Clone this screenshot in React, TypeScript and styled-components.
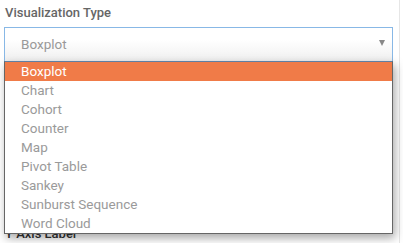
import styled, { createGlobalStyle } from "styled-components";

const GlobalStyle = createGlobalStyle`
  html, body {
    margin: 0;
    padding: 0;
    background: #fff;
  }
  body {
    font-family: Roboto, "Noto Sans", sans-serif;
  }
`;

const options = [
  "Boxplot",
  "Chart",
  "Cohort",
  "Counter",
  "Map",
  "Pivot Table",
  "Sankey",
  "Sunburst Sequence",
  "Word Cloud",
];

export default function App() {
  const selected = "Boxplot";

  return (
    <Page>
      <GlobalStyle />
      <Panel>
        <Field>
          <Label>Visualization Type</Label>
          <SelectWrap>
            <Control>
              <Value>{selected}</Value>
              <Arrow />
            </Control>
            <Menu>
              {options.map((opt) => (
                <Option key={opt} $active={opt === selected}>
                  {opt}
                </Option>
              ))}
            </Menu>
          </SelectWrap>
        </Field>
        <NextField>
          <Label $dark>Y Axis Label</Label>
        </NextField>
      </Panel>
    </Page>
  );
}

const Page = styled.div`
  width: 403px;
  height: 243px;
  overflow: hidden;
  background: #fff;
`;

const Panel = styled.div`
  width: 400px;
  height: 243px;
  padding: 5px 0 0 4px;
  box-sizing: border-box;
  border-right: 1px solid #e6e6e6;
`;

const Field = styled.div`
  display: flex;
  flex-direction: column;
  width: 389px;
`;

const Label = styled.div<{ $dark?: boolean }>`
  font-size: 13px;
  font-weight: 500;
  line-height: 16px;
  color: ${(p) => (p.$dark ? "#333" : "#666")};
  padding-left: 1px;
  margin-bottom: 6px;
`;

const SelectWrap = styled.div`
  position: relative;
`;

const Control = styled.div`
  height: 35px;
  box-sizing: border-box;
  border: 1px solid #88b8e6;
  background: linear-gradient(to bottom, #ffffff 0%, #ffffff 35%, #f0f0f0 100%);
  display: flex;
  align-items: center;
  justify-content: space-between;
  padding: 0 7px 1px 16px;
`;

const Value = styled.span`
  font-size: 13.5px;
  color: #999;
`;

const Arrow = styled.span`
  width: 0;
  height: 0;
  border-left: 3.5px solid transparent;
  border-right: 3.5px solid transparent;
  border-top: 6px solid #888;
  margin-top: -2px;
`;

const Menu = styled.div`
  position: absolute;
  top: 34px;
  left: 0;
  right: 0;
  background: #fff;
  border: 1px solid #666;
  border-top-color: #5f7fa3;
  box-shadow: 2px 4px 9px rgba(0, 0, 0, 0.35);
  z-index: 2;
`;

const Option = styled.div<{ $active?: boolean }>`
  height: 19px;
  line-height: 19px;
  padding-left: 16px;
  font-size: 13.5px;
  color: ${(p) => (p.$active ? "#fff" : "#9a9a9a")};
  background: ${(p) => (p.$active ? "#f07b48" : "#fff")};
`;

const NextField = styled.div`
  margin-top: 164px;
`;
